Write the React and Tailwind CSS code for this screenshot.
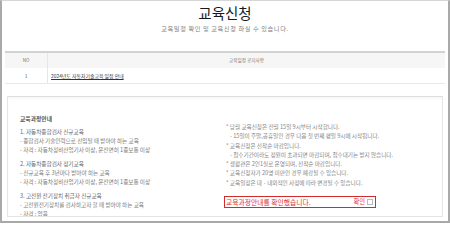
import React from "react";

const font = { fontFamily: '"Noto Sans CJK KR", "Noto Sans", sans-serif' };

export default function App() {
  const leftGroups = [
    {
      head: "1. 자동차종합검사 신규교육",
      lines: ["- 종합검사 기술인력으로 선임될 때 받아야 하는 교육", "- 자격 : 자동차정비산업기사 이상, 운전면허 1종보통 이상"],
    },
    {
      head: "2. 자동차종합검사 정기교육",
      lines: ["- 신규교육 후 3년마다 받아야 하는 교육", "- 자격 : 자동차정비산업기사 이상, 운전면허 1종보통 이상"],
    },
    {
      head: "3. 고전원 전기장치 취급자 신규교육",
      lines: ["- 고전원전기장치를 검사하고자 할 때 받아야 하는 교육", "- 자격 : 없음"],
    },
  ];
  const rightLines = [
    { t: "* 당월 교육신청은 전월 15일 9시부터 시작합니다.", sub: false },
    { t: "- 15일이 주말,공휴일인 경우 다음 첫 번째 평일 9시에 시작됩니다.", sub: true },
    { t: "* 교육신청은 선착순 마감입니다.", sub: false },
    { t: "- 접수기간이라도 정원이 초과되면 마감되며, 접수대기는 받지 않습니다.", sub: true },
    { t: "* 생활관은 2인1실로 운영되며, 선착순 마감입니다.", sub: false },
    { t: "* 교육신청자가 20명 미만인 경우 폐강될 수 있습니다.", sub: false },
    { t: "* 교육일정은 대ㆍ내외적인 사정에 따라 변경될 수 있습니다.", sub: false },
  ];
  return (
    <div
      style={font}
      className="w-[450px] h-[223px] overflow-hidden bg-white border-2 border-[#a9a9a9] border-t-[#d6d6d6] border-t px-[3px] flex flex-col"
    >
      <div className="pt-[3px] flex flex-col items-center">
        <h1 className="text-[14.5px] leading-[17px] font-normal text-[#1a1a1a]">교육신청</h1>
        <p className="mt-[4px] text-[6.2px] leading-[8px] tracking-[0.6px] text-[#808080]">
          교육일정 확인 및 교육신청 하실 수 있습니다.
        </p>
      </div>

      <div className="mt-[18px] border-t-2 border-[#d2d2d2]">
        <div className="flex h-[15px] bg-[#f6f6f6] text-[4.6px] text-[#777]">
          <div className="w-[43px] border-r border-[#e6e6e6] flex items-center justify-center">NO</div>
          <div className="flex-1 flex items-center justify-center">교육일정 공지사항</div>
        </div>
        <div className="flex h-[16px] border-b border-[#e8e8e8] text-[4.9px] text-[#333]">
          <div className="w-[43px] border-r border-[#e6e6e6] flex items-center justify-center text-[#666]">1</div>
          <div className="flex-1 flex items-center pl-[3px]">
            <span className="underline">2024년도 자동차기술교육 일정 안내</span>
          </div>
        </div>
      </div>

      <div className="mt-[12px] mx-[2px] h-[121px] border border-[#e4e4e4] border-t-[#dedede] overflow-hidden grid grid-cols-2 shadow-[inset_0_2px_2px_rgba(0,0,0,0.03)]">
        <div className="pl-[12px] pt-[17px] text-[5.6px] leading-[9px] text-[#7a7a7a]">
          <div className="font-semibold text-[#555] text-[5.8px]">교육과정안내</div>
          {leftGroups.map((g) => (
            <div key={g.head} className="mt-[5px]">
              <div className="text-[#666]">{g.head}</div>
              {g.lines.map((l) => (
                <div key={l}>{l}</div>
              ))}
            </div>
          ))}
        </div>
        <div className="pt-[26px] pl-[1px] flex flex-col items-start">
          <div className="text-[5.6px] leading-[9.3px] text-[#858585]">
            {rightLines.map((l) => (
              <div key={l.t} className={l.sub ? "pl-[4px]" : ""}>
                {l.t}
              </div>
            ))}
          </div>
          <div className="mt-[8px] -ml-[2px] w-[152px] h-[12px] border-[1.5px] border-[#d42a2a] flex items-center pl-[1px] pr-[2px] text-[#e03030] text-[6.8px]">
            <span>교육과정안내를 확인했습니다.</span>
            <span className="ml-auto text-[6.3px]">확인</span>
            <span className="ml-[2px] w-[6px] h-[6px] border border-[#bbb] bg-white inline-block" />
          </div>
        </div>
      </div>
    </div>
  );
}
